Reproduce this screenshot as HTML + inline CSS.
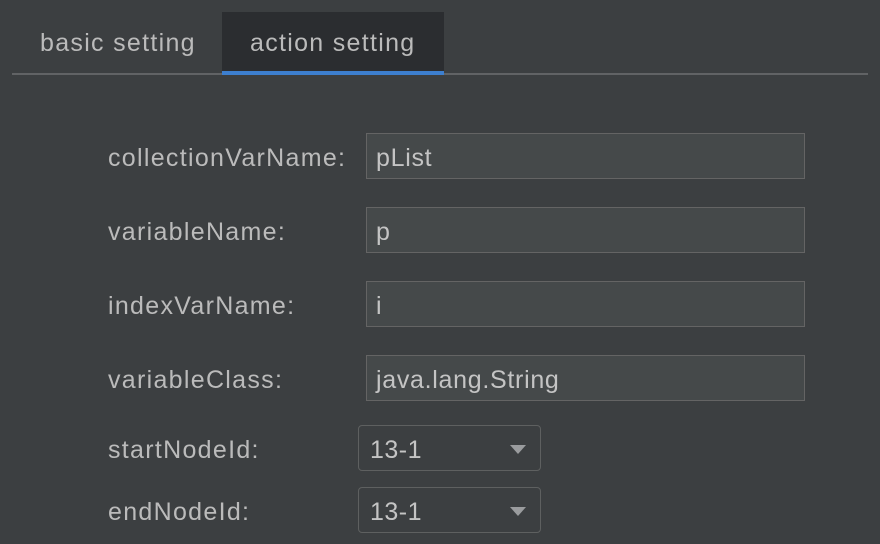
<!DOCTYPE html><html><head><style>
body{margin:0;width:880px;height:544px;background:#3c3f41;font-family:"Liberation Sans",sans-serif;color:#bbbbbb;position:relative;overflow:hidden}
.a{position:absolute}
.t{font-size:25px;letter-spacing:1.3px}
.in{position:absolute;left:366px;width:437px;height:44px;background:#45494a;border:1px solid #646464;font-size:25px;letter-spacing:0.7px;line-height:48px;text-indent:9px;color:#c4c4c4}
.dd{position:absolute;left:358px;width:181px;height:44px;border:1px solid #5e6060;border-radius:4px;font-size:25px;letter-spacing:0.5px;line-height:48px;text-indent:11px;color:#c4c4c4}
.dd:after{content:"";position:absolute;right:14px;top:19px;border-left:8px solid transparent;border-right:8px solid transparent;border-top:9px solid #9a9c9e}
</style></head><body>
<div class="a" style="left:12px;top:73px;width:856px;height:2px;background:#616365"></div>
<div class="a" style="left:222px;top:12px;width:222px;height:60px;background:#2b2d30"></div>
<div class="a" style="left:222px;top:71px;width:222px;height:4px;background:#3d7fcf"></div>
<div class="a t" style="left:40px;top:29px">basic setting</div>
<div class="a t" style="left:250px;top:29px">action setting</div>
<div class="a t" style="left:108px;top:144px">collectionVarName:</div>
<div class="a t" style="left:108px;top:218px">variableName:</div>
<div class="a t" style="left:108px;top:292px">indexVarName:</div>
<div class="a t" style="left:108px;top:366px">variableClass:</div>
<div class="a t" style="left:108px;top:436px">startNodeId:</div>
<div class="a t" style="left:108px;top:498px">endNodeId:</div>
<div class="in" style="top:133px">pList</div>
<div class="in" style="top:207px">p</div>
<div class="in" style="top:281px">i</div>
<div class="in" style="top:355px">java.lang.String</div>
<div class="dd" style="top:425px">13-1</div>
<div class="dd" style="top:487px">13-1</div>
</body></html>
